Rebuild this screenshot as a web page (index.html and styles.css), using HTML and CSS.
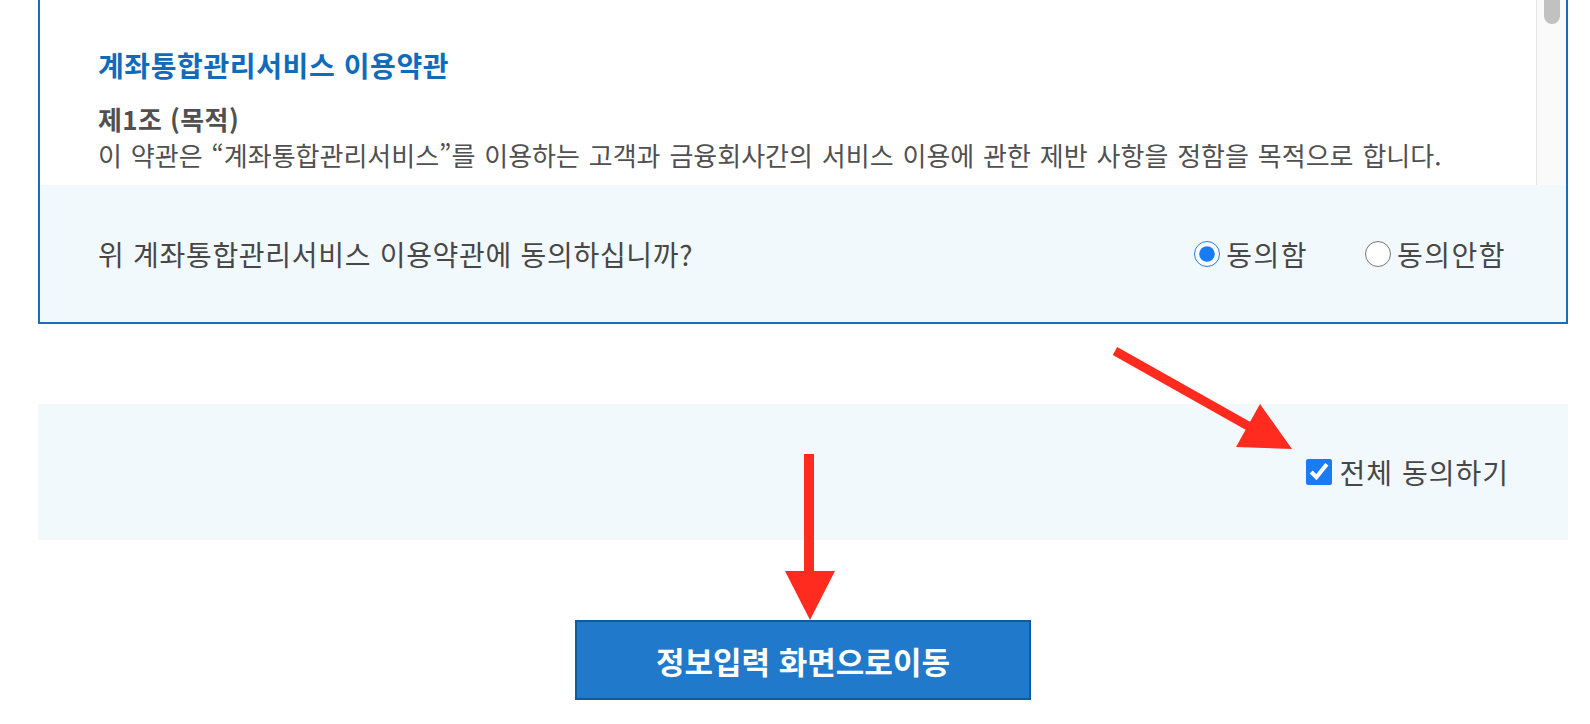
FILE: index.html
```html
<!DOCTYPE html>
<html lang="ko">
<head>
<meta charset="utf-8">
<title>계좌통합관리서비스 이용약관</title>
<link rel="stylesheet" href="styles.css">
</head>
<body>
<div class="page">
  <section class="terms-box">
    <div class="terms-top">
      <div class="terms-body">
        <h2 class="terms-title">계좌통합관리서비스 이용약관</h2>
        <h3 class="article-title">제1조 (목적)</h3>
        <p class="article-text">이 약관은 “계좌통합관리서비스”를 이용하는 고객과 금융회사간의 서비스 이용에 관한 제반 사항을 정함을 목적으로 합니다.</p>
      </div>
      <div class="scrollbar"><div class="thumb"></div></div>
    </div>
    <div class="terms-agree">
      <p class="question">위 계좌통합관리서비스 이용약관에 동의하십니까?</p>
      <div class="radio-group">
        <label class="radio"><input type="radio" name="agree1" checked><span>동의함</span></label>
        <label class="radio radio-second"><input type="radio" name="agree1"><span>동의안함</span></label>
      </div>
    </div>
  </section>

  <div class="all-agree">
    <label class="check"><input type="checkbox" checked><span>전체 동의하기</span></label>
  </div>

  <div class="actions">
    <button class="next-btn" type="button">정보입력 화면으로이동</button>
  </div>
</div>

<svg class="annotations" width="1590" height="724" viewBox="0 0 1590 724">
  <line x1="1115" y1="351" x2="1250" y2="427" stroke="#fe2b1e" stroke-width="9"/>
  <polygon points="1260,404 1236,447 1292,449" fill="#fe2b1e"/>
  <rect x="804" y="454" width="10" height="118" fill="#fe2b1e"/>
  <polygon points="785,571 835,571 810,620" fill="#fe2b1e"/>
</svg>
</body>
</html>
```

FILE: styles.css
```css
html, body {
  margin: 0;
  padding: 0;
  background: #ffffff;
}

body {
  font-family: "Noto Sans CJK KR", "Noto Sans", sans-serif;
  color: #505050;
  width: 1590px;
  height: 724px;
  overflow: hidden;
  position: relative;
}

.page {
  margin-left: 38px;
  width: 1530px;
}

.terms-box {
  border: 2px solid #1c6db4;
  border-top: 0;
  box-sizing: border-box;
  width: 1530px;
}

.terms-top {
  display: flex;
  height: 185px;
}

.terms-body {
  flex: 1;
  padding: 47px 0 0 58px;
  background: #ffffff;
}

.terms-title {
  margin: 0 0 18px;
  font-size: 28px;
  line-height: 36px;
  font-weight: 700;
  color: #0f6cbc;
  letter-spacing: 0.6px;
}

.article-title {
  margin: 0;
  font-size: 26px;
  line-height: 36px;
  font-weight: 700;
  color: #505050;
  letter-spacing: 0.4px;
}

.article-text {
  margin: 0;
  font-size: 26px;
  line-height: 36px;
  color: #505050;
  white-space: nowrap;
  word-spacing: 1.6px;
}

.scrollbar {
  width: 29px;
  background: #fafafa;
  border-left: 1px solid #e6e6e6;
  position: relative;
}

.thumb {
  position: absolute;
  left: 7px;
  top: -20px;
  width: 16px;
  height: 44px;
  border-radius: 8px;
  background: #c1c1c1;
}

.terms-agree {
  display: flex;
  align-items: center;
  justify-content: space-between;
  height: 137px;
  padding: 0 60px 0 58px;
  background: #f2f9fd;
}

.question {
  margin: 0;
  font-size: 28px;
  line-height: 36px;
  color: #474747;
  letter-spacing: 0.7px;
}

.radio-group {
  display: flex;
  align-items: center;
}

.radio,
.check {
  display: flex;
  align-items: center;
  font-size: 28px;
  line-height: 36px;
  color: #474747;
  letter-spacing: 1.5px;
}

.radio input {
  width: 26px;
  height: 26px;
  margin: 0 6px 0 0;
  accent-color: #1a7cf5;
}

.radio-second {
  margin-left: 57px;
}

.all-agree {
  margin-top: 80px;
  height: 136px;
  background: #f2f9fd;
  display: flex;
  align-items: center;
  justify-content: flex-end;
  padding-right: 59px;
}

.check {
  letter-spacing: 1px;
}

.check input {
  width: 26px;
  height: 26px;
  margin: 0 8px 0 0;
  accent-color: #1a7cf5;
}

.actions {
  display: flex;
  justify-content: center;
  margin-top: 80px;
}

.next-btn {
  width: 456px;
  height: 80px;
  border: 2px solid #0f5c9c;
  background: #2079cb;
  color: #ffffff;
  font-family: "Noto Sans CJK KR", "Noto Sans", sans-serif;
  font-size: 31px;
  font-weight: 700;
  padding: 0;
}

.annotations {
  position: absolute;
  top: 0;
  left: 0;
  pointer-events: none;
}
```
